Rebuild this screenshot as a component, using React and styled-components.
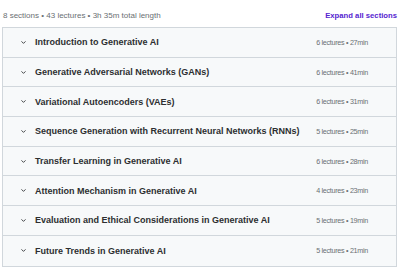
import React from 'react';
import styled, { createGlobalStyle } from 'styled-components';

const sections = [
  { title: 'Introduction to Generative AI', lectures: 6, length: '27min' },
  { title: 'Generative Adversarial Networks (GANs)', lectures: 6, length: '41min' },
  { title: 'Variational Autoencoders (VAEs)', lectures: 6, length: '31min' },
  { title: 'Sequence Generation with Recurrent Neural Networks (RNNs)', lectures: 5, length: '25min' },
  { title: 'Transfer Learning in Generative AI', lectures: 6, length: '28min' },
  { title: 'Attention Mechanism in Generative AI', lectures: 4, length: '23min' },
  { title: 'Evaluation and Ethical Considerations in Generative AI', lectures: 5, length: '19min' },
  { title: 'Future Trends in Generative AI', lectures: 5, length: '21min' },
];

const GlobalStyle = createGlobalStyle`
  body {
    margin: 0;
    background: #ffffff;
    font-family: "Liberation Sans", Arial, sans-serif;
  }
`;

const Page = styled.div`
  width: 400px;
  padding: 9px 3px 0 2px;
  box-sizing: border-box;
`;

const TopBar = styled.div`
  display: flex;
  justify-content: space-between;
  align-items: center;
  height: 12px;
  margin-bottom: 6px;
`;

const Summary = styled.span`
  font-size: 8px;
  color: #6a6f73;
  padding-left: 1px;
`;

const ExpandLink = styled.a`
  font-size: 7.7px;
  font-weight: 700;
  color: #5624d0;
  text-decoration: none;
  cursor: pointer;
`;

const Curriculum = styled.div`
  border: 1px solid #d1d7dc;
  display: flex;
  flex-direction: column;
`;

const SectionRow = styled.div`
  display: flex;
  align-items: center;
  height: 29.7px;
  padding: 0 28px 0 17px;
  background: #f7f9fa;
  border-bottom: ${(p) => (p.$last ? 'none' : '1px solid #d1d7dc')};
  box-sizing: border-box;
`;

const Chevron = styled.svg`
  width: 7px;
  height: 7px;
  flex-shrink: 0;
  margin-right: 8px;
`;

const Title = styled.span`
  flex: 1;
  font-size: 9px;
  font-weight: 700;
  color: #2d2f31;
  white-space: nowrap;
`;

const Meta = styled.span`
  font-size: 7.2px;
  letter-spacing: -0.3px;
  color: #6a6f73;
  white-space: nowrap;
`;

export default function App() {
  return (
    <Page>
      <GlobalStyle />
      <TopBar>
        <Summary>8 sections • 43 lectures • 3h 35m total length</Summary>
        <ExpandLink>Expand all sections</ExpandLink>
      </TopBar>
      <Curriculum>
        {sections.map((s, i) => (
          <SectionRow key={s.title} $last={i === sections.length - 1}>
            <Chevron viewBox="0 0 24 24" fill="none" stroke="#2d2f31" strokeWidth="3" strokeLinecap="round" strokeLinejoin="round">
              <path d="M6 9l6 6 6-6" />
            </Chevron>
            <Title>{s.title}</Title>
            <Meta>{s.lectures} lectures • {s.length}</Meta>
          </SectionRow>
        ))}
      </Curriculum>
    </Page>
  );
}
